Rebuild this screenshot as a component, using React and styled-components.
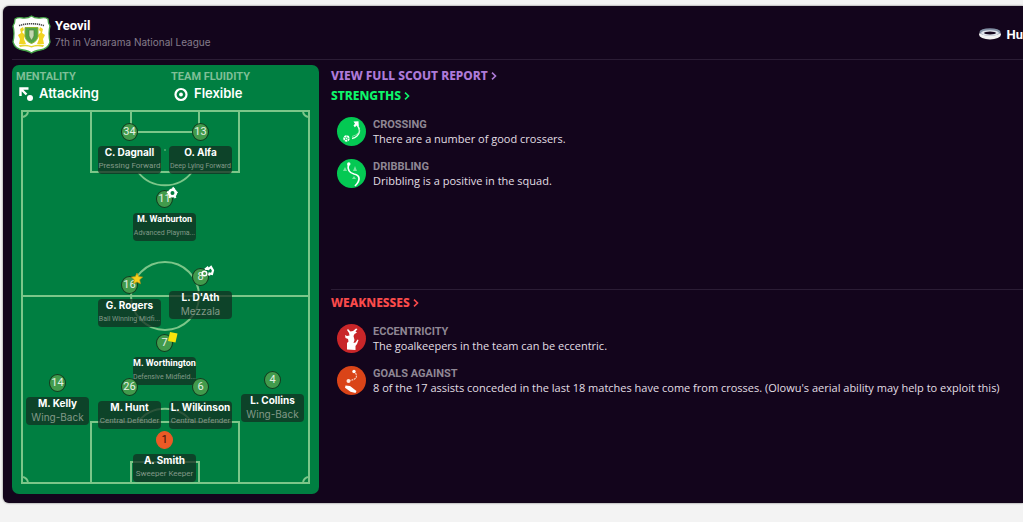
import React from "react";
import styled, { createGlobalStyle, css } from "styled-components";

const GlobalStyle = createGlobalStyle`
  *, *::before, *::after { box-sizing: border-box; }
  body { margin: 0; background: #f3f3f3; font-family: Roboto, "Liberation Sans", sans-serif; }
  h1, h2, h3, p, dl, dt, dd, ul { margin: 0; padding: 0; }
  ul { list-style: none; }
`;

const Page = styled.main`
  padding: 6px 0 20px 3px;
`;

const Card = styled.section`
  padding: 0 0 9px 9px;
  border-radius: 6px 0 0 6px;
  background: #13051c;
  box-shadow: 0 0 2px #555;
`;

const Header = styled.header`
  display: flex;
  align-items: center;
  gap: 4px;
  height: 54px;
  padding-top: 3px;
  border-bottom: 1px solid #2b1d35;
`;

const ClubText = styled.div`
  flex: 1;
`;

const ClubName = styled.h1`
  font: 700 13px/17px Roboto, sans-serif;
  color: #fff;
`;

const ClubStanding = styled.p`
  font: 400 10px/17px Inter, sans-serif;
  color: #857c8b;
`;

const Opponent = styled.div`
  display: flex;
  align-items: center;
  gap: 5px;
  font: 700 13px/17px Roboto, sans-serif;
  color: #fff;
`;

const Body = styled.div`
  display: flex;
  gap: 12px;
  padding-top: 5px;
`;

const Tactics = styled.section`
  flex: 0 0 307px;
  padding: 5px 9px 10px;
  border-radius: 7px;
  background: #007f41;
`;

const Settings = styled.dl`
  display: grid;
  grid-template-columns: 155px 1fr;
  margin: 0 -5px;
  padding-bottom: 7px;
`;

const SettingLabel = styled.dt`
  font: 700 11px/14px Roboto, sans-serif;
  color: #7fbf97;
`;

const SettingValue = styled.dd`
  display: flex;
  align-items: center;
  gap: 5px;
  padding-left: 2px;
  font: 600 13px/19px Inter, sans-serif;
  color: #fff;
`;

const Pitch = styled.div`
  position: relative;
`;

const PitchLines = styled.svg`
  display: block;
  width: 100%;
  fill: none;
  stroke: #7cc689;
  stroke-width: 2;
`;

const Player = styled.div`
  position: absolute;
  left: ${(p) => (p.$x / 289) * 100}%;
  top: ${(p) => (p.$y / 374) * 100}%;
  display: flex;
  flex-direction: column;
  align-items: center;
  gap: 5px;
  width: 63px;
  margin: -9px 0 0 -31px;
`;

const Shirt = styled.span`
  position: relative;
  width: 17px;
  height: 18px;
  border: 1px solid #123a1e;
  border-radius: 50%;
  background: #429b4c;
  font: 400 11px/16px Roboto, sans-serif;
  text-align: center;
  color: #e4f1e4;
  ${(p) =>
    p.$keeper &&
    css`
      border-color: #ec5a26;
      background: #ec5a26;
      color: #3a0f08;
    `}
`;

const Badge = styled.svg`
  position: absolute;
  left: 9px;
  top: -4px;
  overflow: visible;
`;

const Plate = styled.div`
  display: flex;
  flex-direction: column;
  align-items: center;
  width: 100%;
  height: 28px;
  border-radius: 4px;
  background: rgba(17, 46, 32, 0.74);
  white-space: nowrap;
`;

const PlayerName = styled.div`
  font: ${(p) => (p.$long ? "700 9px/13px Roboto" : "700 10px/13px Inter")}, sans-serif;
  color: #fff;
`;

const roleFonts = {
  normal: "400 10px/14px Inter",
  small: "400 8px/14px Roboto",
  tiny: "400 7px/14px Roboto",
};

const Role = styled.div`
  font: ${(p) => roleFonts[p.$size]}, sans-serif;
  color: #829988;
`;

const Report = styled.div`
  flex: 1;
  min-width: 0;
  display: grid;
  grid-template-rows: 12fr 11fr;
`;

const Group = styled.section`
  display: flex;
  flex-direction: column;
  align-items: flex-start;
  padding-top: ${(p) => (p.$divided ? 3 : 1)}px;
  border-top: ${(p) => (p.$divided ? "1px solid #2b1d35" : "none")};
`;

const HeadLink = styled.a`
  display: flex;
  align-items: center;
  gap: 3px;
  font: 800 12px/20px "Noto Sans", sans-serif;
  color: ${(p) => p.$color};
  text-decoration: none;
`;

const Traits = styled.ul`
  display: flex;
  flex-direction: column;
  gap: 13px;
  padding: 11px 0 0 6px;
`;

const Trait = styled.li`
  display: flex;
  height: 29px;
  gap: 7px;
`;

const TraitTitle = styled.h3`
  padding-top: 1px;
  font: 700 11px/14px Roboto, sans-serif;
  color: #8f8794;
`;

const TraitText = styled.p`
  font: 400 11px/14px "Open Sans", sans-serif;
  color: #e2dfe4;
`;

function Crest() {
  return (
    <svg width="39" height="39" viewBox="0 0 39 39" aria-hidden="true">
      <path d="M19.500 1 Q23 3.500 28 3 Q34 2 36 4 Q36 8 38 11 Q36 18 38 27 Q36 34 28 35 Q22 36 19.500 38 Q17 36 11 35 Q3 34 1 27 Q3 18 1 11 Q3 8 3 4 Q6 2 11 3 Q16 3.500 19.500 1Z" fill="#fff" stroke="#46a447" strokeWidth="1.300" />
      <path d="M7 10.500 Q19.500 7 32 10.500" fill="none" stroke="#444" strokeWidth="1.600" strokeDasharray="1.300 .7" />
      <path d="M8 14l3-2 1 3-2 2 3 3-1 4 2 5H7l1-5-2-4 3-2zM31 14l-3-2-1 3 2 2-3 3 1 4-2 5h7l-1-5 2-4-3-2z" fill="#f0d423" />
      <path d="M13 12.500h13v9q-1 5-6.500 7q-5.500-2-6.500-7z" fill="#50a344" stroke="#92b32c" />
      <path d="M17 15h5v6l-2 4h-1l-2-4z" fill="#c3d6b0" stroke="#517e40" strokeWidth=".7" />
      <path d="M7 30Q13 28.500 19.500 31Q26 28.500 32 30L31 32Q25 30.500 19.500 32.500Q14 30.500 8 32Z" fill="#e6d52c" />
    </svg>
  );
}

function HaloBadge() {
  return (
    <svg width="24" height="14" viewBox="0 0 24 14" aria-hidden="true">
      <ellipse cx="12" cy="7.500" rx="11" ry="5" fill="#f2f2f2" />
      <ellipse cx="12" cy="5" rx="10.500" ry="3.800" fill="#8290a4" />
      <ellipse cx="12" cy="6" rx="9" ry="2.800" fill="#dfe3ea" />
      <ellipse cx="12" cy="6" rx="6" ry="1.500" fill="#13051c" />
    </svg>
  );
}

function AttackIcon() {
  return (
    <svg width="16" height="16" viewBox="0 0 16 16" fill="none" stroke="#fff" strokeWidth="2.400" aria-hidden="true">
      <path d="M2.500 10V2.500H10.500M2.500 2.500l6 6" />
      <circle cx="12" cy="12" r="3" fill="#fff" stroke="none" />
    </svg>
  );
}

function TargetIcon() {
  return (
    <svg width="16" height="16" viewBox="0 0 16 16" fill="none" stroke="#fff" aria-hidden="true">
      <circle cx="8" cy="8.500" r="5.500" strokeWidth="2.200" />
      <circle cx="8" cy="8.500" r="1.900" fill="#fff" stroke="none" />
    </svg>
  );
}

function Chevron() {
  return (
    <svg width="6" height="8" viewBox="0 0 6 8" fill="none" stroke="currentColor" strokeWidth="1.600" aria-hidden="true">
      <path d="M1 .7L4.500 4L1 7.300" />
    </svg>
  );
}

const badges = {
  ball: (
    <>
      <circle cx="6.500" cy="6" r="3.300" fill="none" stroke="#fff" strokeWidth="2.600" />
      <path d="M6.500 .5l2 2M1 5l2.500 1M11.500 5L9 6.500M3.500 11l1-2.500M9.500 11l-1-2" stroke="#fff" strokeWidth="2" />
    </>
  ),
  balls: (
    <>
      <circle cx="2.500" cy="8.500" r="2.300" fill="none" stroke="#fff" strokeWidth="1.500" />
      <path d="M3 4.500L5.500 2.500L6.500 4L9 2L11 5.500L10 9L7.500 8.500L7 10.500" fill="none" stroke="#fff" strokeWidth="2.200" />
    </>
  ),
  star: <path d="M6 0l1.700 3.600 4 .5-3 2.700.8 4L6 8.900l-3.500 1.900.8-4-3-2.700 4-.5z" fill="#f8cf1c" stroke="#b98b12" strokeWidth=".6" />,
  card: <path d="M4 1l7.500 1.500-2 9-7.500-1.500z" fill="#f6e40c" />,
};

function CrossingIcon() {
  return (
    <svg width="29" height="29" viewBox="0 0 29 29" aria-hidden="true">
      <circle cx="14.500" cy="14.500" r="14.500" fill="#04c953" />
      <path d="M20 8Q25 14 20 19Q18 21 15 21.500" fill="none" stroke="#e8ffee" strokeWidth="1.300" />
      <path d="M22.500 12Q23 17 15 19.500" fill="none" stroke="#9aebb5" strokeWidth=".8" />
      <path d="M16.500 4.500l5-.2.300 5.200-1.700-1.200-2.300 2-1.300-1.700 1.500-1.800z" fill="#fff" />
      <circle cx="9.500" cy="21.500" r="2.400" fill="none" stroke="#fff" strokeWidth="1.700" strokeDasharray="2.200 .5" />
      <circle cx="9.500" cy="21.500" r="1" fill="#dfffe8" />
    </svg>
  );
}

function DribblingIcon() {
  return (
    <svg width="29" height="29" viewBox="0 0 29 29" aria-hidden="true">
      <circle cx="14.500" cy="14.500" r="14.500" fill="#04c953" />
      <path d="M11.500 5C10 12 13 14 17 15C23 16 24 21 18 27" fill="none" stroke="#fff" strokeWidth="1.700" />
      <circle cx="11.800" cy="5" r="1.700" fill="#fff" />
      <path d="M8 8l2 4H6zM18 7l2 5h-4zM17 17l2 3h-4z" fill="#7ae3a1" />
    </svg>
  );
}

function EccentricIcon() {
  return (
    <svg width="29" height="29" viewBox="0 0 29 29" aria-hidden="true">
      <circle cx="14.500" cy="14.500" r="14.500" fill="#c92629" />
      <path d="M10 25.500v-6.500l1.500-1.500-.5-2.500-2.500-1-.5-3 2 1 2.500-.5-.5-2.500-2-3 1-1 2.500 2.500 2.500-.5 3-2.500 1.500.5-2 2.500 1.500 1-2.500 1.500-1 2 1 4-1 3 2-.5 2-3 1 .5-1.500 4-1.500 2v4z" fill="#fff" />
    </svg>
  );
}

function GoalsAgainstIcon() {
  return (
    <svg width="29" height="29" viewBox="0 0 29 29" aria-hidden="true">
      <circle cx="14.500" cy="14.500" r="14.500" fill="#da4418" />
      <circle cx="17" cy="5.500" r="1.700" fill="#fff" />
      <path d="M18.500 7Q22 13 13 14.500" fill="none" stroke="#f6c6b6" strokeWidth="1.200" strokeDasharray="2 .8" />
      <circle cx="11.500" cy="15" r="2" fill="#ffe8df" />
      <path d="M8.500 19.500l4.500.5 6.500 5-1 2-5-1.300-5.500-4z" fill="#fff" />
    </svg>
  );
}

const players = [
  { n: 34, name: "C. Dagnall", role: "Pressing Forward", x: 108, y: 22, size: "small" },
  { n: 13, name: "O. Alfa", role: "Deep Lying Forward", x: 179, y: 22, size: "tiny" },
  { n: 11, name: "M. Warburton", role: "Advanced Playma...", x: 143, y: 89, size: "tiny", long: true, badge: "ball" },
  { n: 16, name: "G. Rogers", role: "Ball Winning Midfi...", x: 108, y: 175, size: "tiny", badge: "star" },
  { n: 8, name: "L. D'Ath", role: "Mezzala", x: 179, y: 167, size: "normal", badge: "balls" },
  { n: 7, name: "M. Worthington", role: "Defensive Midfield...", x: 143, y: 233, size: "tiny", long: true, badge: "card" },
  { n: 14, name: "M. Kelly", role: "Wing-Back", x: 36, y: 273, size: "normal" },
  { n: 26, name: "M. Hunt", role: "Central Defender", x: 108, y: 277, size: "small" },
  { n: 6, name: "L. Wilkinson", role: "Central Defender", x: 179, y: 277, size: "small" },
  { n: 4, name: "L. Collins", role: "Wing-Back", x: 251, y: 270, size: "normal" },
  { n: 1, name: "A. Smith", role: "Sweeper Keeper", x: 143, y: 330, size: "small", keeper: true },
];

const strengths = [
  { title: "CROSSING", text: "There are a number of good crossers.", Icon: CrossingIcon },
  { title: "DRIBBLING", text: "Dribbling is a positive in the squad.", Icon: DribblingIcon },
];

const weaknesses = [
  { title: "ECCENTRICITY", text: "The goalkeepers in the team can be eccentric.", Icon: EccentricIcon },
  {
    title: "GOALS AGAINST",
    text: "8 of the 17 assists conceded in the last 18 matches have come from crosses. (Olowu's aerial ability may help to exploit this)",
    Icon: GoalsAgainstIcon,
  },
];

function TraitList({ items }) {
  return (
    <Traits>
      {items.map(({ title, text, Icon }) => (
        <Trait key={title}>
          <Icon />
          <div>
            <TraitTitle>{title}</TraitTitle>
            <TraitText>{text}</TraitText>
          </div>
        </Trait>
      ))}
    </Traits>
  );
}

export default function App() {
  return (
    <Page>
      <GlobalStyle />
      <Card>
        <Header>
          <Crest />
          <ClubText>
            <ClubName>Yeovil</ClubName>
            <ClubStanding>7th in Vanarama National League</ClubStanding>
          </ClubText>
          <Opponent>
            <HaloBadge />
            Hu
          </Opponent>
        </Header>
        <Body>
          <Tactics>
            <Settings>
              <div>
                <SettingLabel>MENTALITY</SettingLabel>
                <SettingValue><AttackIcon />Attacking</SettingValue>
              </div>
              <div>
                <SettingLabel>TEAM FLUIDITY</SettingLabel>
                <SettingValue><TargetIcon />Flexible</SettingValue>
              </div>
            </Settings>
            <Pitch>
              <PitchLines viewBox="0 0 289 374" aria-hidden="true">
                <path d="M1 1H288V373H1ZM1 186H288M70 1V62H218V1M110 1V22H178V1M70 373V312H218V373M110 373V352H178V373" />
                <circle cx="144" cy="186" r="34" />
                <path d="M117 62A34 34 0 0 0 171 62M117 312A34 34 0 0 1 171 312M1 7A6 6 0 0 0 7 1M288 7A6 6 0 0 1 282 1M1 367A6 6 0 0 1 7 373M288 367A6 6 0 0 0 282 373M143.500 40h1M143.500 333h1" />
              </PitchLines>
              {players.map((p) => (
                <Player key={p.n} $x={p.x} $y={p.y}>
                  <Shirt $keeper={p.keeper}>
                    {p.n}
                    {p.badge && <Badge width="12" height="12" viewBox="0 0 12 12">{badges[p.badge]}</Badge>}
                  </Shirt>
                  <Plate>
                    <PlayerName $long={p.long}>{p.name}</PlayerName>
                    <Role $size={p.size}>{p.role}</Role>
                  </Plate>
                </Player>
              ))}
            </Pitch>
          </Tactics>
          <Report>
            <Group>
              <HeadLink href="#report" $color="#ad7ad8">VIEW FULL SCOUT REPORT<Chevron /></HeadLink>
              <HeadLink href="#strengths" $color="#0df56a">STRENGTHS<Chevron /></HeadLink>
              <TraitList items={strengths} />
            </Group>
            <Group $divided>
              <HeadLink href="#weaknesses" $color="#fb4b4b">WEAKNESSES<Chevron /></HeadLink>
              <TraitList items={weaknesses} />
            </Group>
          </Report>
        </Body>
      </Card>
    </Page>
  );
}
